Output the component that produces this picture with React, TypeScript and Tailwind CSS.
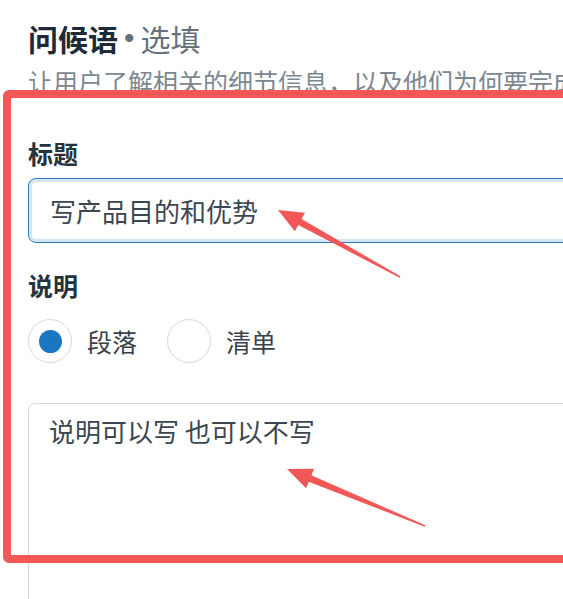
import React from "react";

type Pt = [number, number];

// red annotation arrow, tapered shaft + triangular head
function Arrow({ tip, tail }: { tip: Pt; tail: Pt }) {
  const dx = tail[0] - tip[0];
  const dy = tail[1] - tip[1];
  const len = Math.hypot(dx, dy);
  const u: Pt = [dx / len, dy / len];
  const n: Pt = [-u[1], u[0]];
  const at = (d: number, w: number): string =>
    `${tip[0] + u[0] * d + n[0] * w},${tip[1] + u[1] * d + n[1] * w}`;
  const head = [at(0, 0), at(25, 10.5), at(25, -10.5)].join(" ");
  const shaft = [at(18, 3.6), at(len, 0.8), at(len, -0.8), at(18, -3.6)].join(" ");
  return (
    <g fill="#f25757">
      <polygon points={head} />
      <polygon points={shaft} />
    </g>
  );
}

function Radio({ checked, label }: { checked?: boolean; label: string }) {
  return (
    <div className="flex items-center gap-[15px]">
      <span className="flex h-[44px] w-[44px] items-center justify-center rounded-full border border-[#d6dade] bg-white">
        {checked && <span className="h-[23px] w-[23px] rounded-full bg-[#1b76c2]" />}
      </span>
      <span className="text-[25px] leading-[32px] text-[#37424c]">{label}</span>
    </div>
  );
}

export default function App() {
  return (
    <div className="relative h-[599px] w-[563px] overflow-hidden bg-white font-['Noto_Sans_CJK_SC',sans-serif]">
      <div className="flex w-[800px] flex-col pl-[28px]">
        <div className="mt-[20px] flex items-center whitespace-nowrap text-[30px] leading-[36px]">
          <span className="font-bold text-[#1e2a35]">问候语</span>
          <span className="mx-[6px] font-['Liberation_Sans',sans-serif] text-[#66717c]">•</span>
          <span className="text-[#66717c]">选填</span>
        </div>
        <p className="mt-[9px] whitespace-nowrap text-[25px] leading-[32px] text-[#7d8790]">
          让用户了解相关的细节信息，以及他们为何要完成此操作
        </p>

        <label className="mt-[40px] text-[25px] font-bold leading-[32px] text-[#27323c]">标题</label>
        <div className="mt-[9px] flex h-[65px] w-[700px] items-center rounded-[8px] border border-[#2f7dc0] pl-[21px] shadow-[inset_0_0_0_3px_#d3e6f6]">
          <span className="text-[26px] text-[#3b4651]">写产品目的和优势</span>
        </div>

        <label className="mt-[26px] text-[25px] font-bold leading-[32px] text-[#27323c]">说明</label>
        <div className="mt-[18px] flex items-center gap-[30px]">
          <Radio checked label="段落" />
          <Radio label="清单" />
        </div>

        <div className="mt-[40px] h-[250px] w-[700px] rounded-[7px] border border-[#d5d9de] pl-[20px] pt-[11px]">
          <span className="text-[26px] leading-[32px] text-[#3b4651]">说明可以写 也可以不写</span>
        </div>
      </div>

      {/* annotation overlay */}
      <div className="pointer-events-none absolute left-[3px] top-[90px] h-[473px] w-[700px] rounded-[6px] border-[8px] border-[#f55656]" />
      <svg className="pointer-events-none absolute left-0 top-0" width="563" height="599">
        <Arrow tip={[278, 210]} tail={[400, 277]} />
        <Arrow tip={[287, 469]} tail={[425, 526]} />
      </svg>
    </div>
  );
}
